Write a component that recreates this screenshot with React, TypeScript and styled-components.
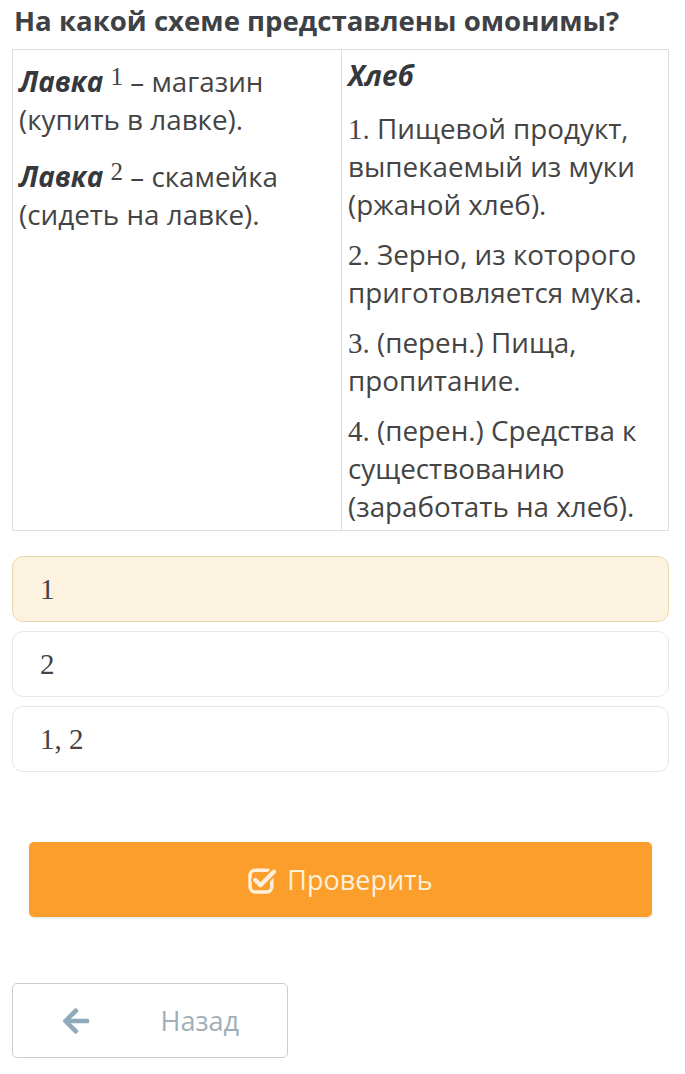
import styled, { createGlobalStyle } from 'styled-components';
import { FaArrowLeft } from 'react-icons/fa';

const GlobalStyle = createGlobalStyle`
    body {
        margin: 0;
        background: #ffffff;
        font-family: 'Open Sans', 'Noto Sans', sans-serif;
        color: #444444;
    }
`;

const Page = styled.div`
    padding: 0 16px 0 12px;
    display: flex;
    flex-direction: column;
`;

const Title = styled.h1`
    margin: 0;
    padding: 0 0 0 2px;
    height: 49px;
    font-size: 27.6px;
    line-height: 40px;
    font-weight: 700;
    color: #3e4145;
    white-space: nowrap;
`;

const Table = styled.div`
    display: grid;
    grid-template-columns: 328px 1fr;
    border: 1px solid #dcdfe2;
`;

const Cell = styled.div<{ $divider?: boolean }>`
    padding: ${({ $divider }) => ($divider ? '6px 6px 5px 6px' : '12px 6px 5px 6px')};
    border-left: ${({ $divider }) => ($divider ? '1px solid #dcdfe2' : 'none')};
    font-size: 27.8px;
    line-height: 38px;
    color: #444444;
`;

const Para = styled.p<{ $gap?: number }>`
    margin: 0 0 ${({ $gap }) => $gap ?? 12}px 0;
    &:last-child {
        margin-bottom: 0;
    }
`;

const Term = styled.b`
    font-style: italic;
    font-weight: 700;
    color: #36383b;
`;

const Num = styled.span`
    font-family: 'Liberation Serif', 'DejaVu Serif', serif;
    font-size: 29px;
    line-height: 1;
`;

const Sup = styled.sup`
    font-family: 'Liberation Serif', 'DejaVu Serif', serif;
    font-size: 25px;
    line-height: 0;
    vertical-align: 7px;
`;

const Options = styled.div`
    margin-top: 25px;
    display: flex;
    flex-direction: column;
    gap: 9px;
`;

const Option = styled.div<{ $selected?: boolean }>`
    height: 66px;
    box-sizing: border-box;
    display: flex;
    align-items: center;
    padding: 0 27px;
    border-radius: 11px;
    border: 1px solid ${({ $selected }) => ($selected ? '#ead9ad' : '#e6e7e8')};
    background: ${({ $selected }) => ($selected ? '#fbf3e0' : '#ffffff')};
    font-family: 'Liberation Serif', 'DejaVu Serif', serif;
    font-size: 29px;
    color: #444444;
`;

const CheckButton = styled.button`
    margin: 70px 17px 0 17px;
    height: 75px;
    border: none;
    border-radius: 5px;
    background: #fb9e2c;
    color: #fdf0da;
    font-family: 'Open Sans', 'Noto Sans', sans-serif;
    font-size: 27px;
    display: flex;
    align-items: center;
    justify-content: center;
    gap: 9px;
    box-shadow: 0 1px 2px rgba(0, 0, 0, 0.12);
`;

const CheckIcon = () => (
    <svg width="30" height="28" viewBox="0 0 29 27" aria-hidden="true">
        <rect x="2" y="4" width="21" height="21" rx="5" fill="none" stroke="#fdf0da" strokeWidth="3.4" />
        <path
            d="M7 13.5 L12 18.5 L25 5.5"
            fill="none"
            stroke="#fb9e2c"
            strokeWidth="8"
            strokeLinecap="round"
            strokeLinejoin="round"
        />
        <path
            d="M7 13.5 L12 18.5 L25 5.5"
            fill="none"
            stroke="#fdf0da"
            strokeWidth="4.2"
            strokeLinecap="round"
            strokeLinejoin="round"
        />
    </svg>
);

const BackButton = styled.button`
    margin-top: 66px;
    width: 276px;
    height: 75px;
    box-sizing: border-box;
    border: 1px solid #c9cdd0;
    border-radius: 5px;
    background: #ffffff;
    color: #a0aeb7;
    font-family: 'Open Sans', 'Noto Sans', sans-serif;
    font-size: 27px;
    display: flex;
    align-items: center;
    padding: 0 48px;
    justify-content: space-between;
`;

const ArrowIcon = styled(FaArrowLeft)`
    color: #8fabbb;
    font-size: 30px;
`;

const App = () => {
    return (
        <>
            <GlobalStyle />
            <Page>
                <Title>На какой схеме представлены омонимы?</Title>
                <Table>
                    <Cell>
                        <Para $gap={19}>
                            <Term>Лавка</Term> <Sup>1</Sup> – магазин (купить в лавке).
                        </Para>
                        <Para>
                            <Term>Лавка</Term> <Sup>2</Sup> – скамейка (сидеть на лавке).
                        </Para>
                    </Cell>
                    <Cell $divider>
                        <Para $gap={15}>
                            <Term>Хлеб</Term>
                        </Para>
                        <Para>
                            <Num>1</Num>. Пищевой продукт, выпекаемый из муки (ржаной хлеб).
                        </Para>
                        <Para>
                            <Num>2</Num>. Зерно, из которого приготовляется мука.
                        </Para>
                        <Para>
                            <Num>3</Num>. (перен.) Пища, пропитание.
                        </Para>
                        <Para>
                            <Num>4</Num>. (перен.) Средства к существованию (заработать на хлеб).
                        </Para>
                    </Cell>
                </Table>
                <Options>
                    <Option $selected>1</Option>
                    <Option>2</Option>
                    <Option>1, 2</Option>
                </Options>
                <CheckButton>
                    <CheckIcon />
                    Проверить
                </CheckButton>
                <BackButton>
                    <ArrowIcon />
                    Назад
                </BackButton>
            </Page>
        </>
    );
};

export default App;
